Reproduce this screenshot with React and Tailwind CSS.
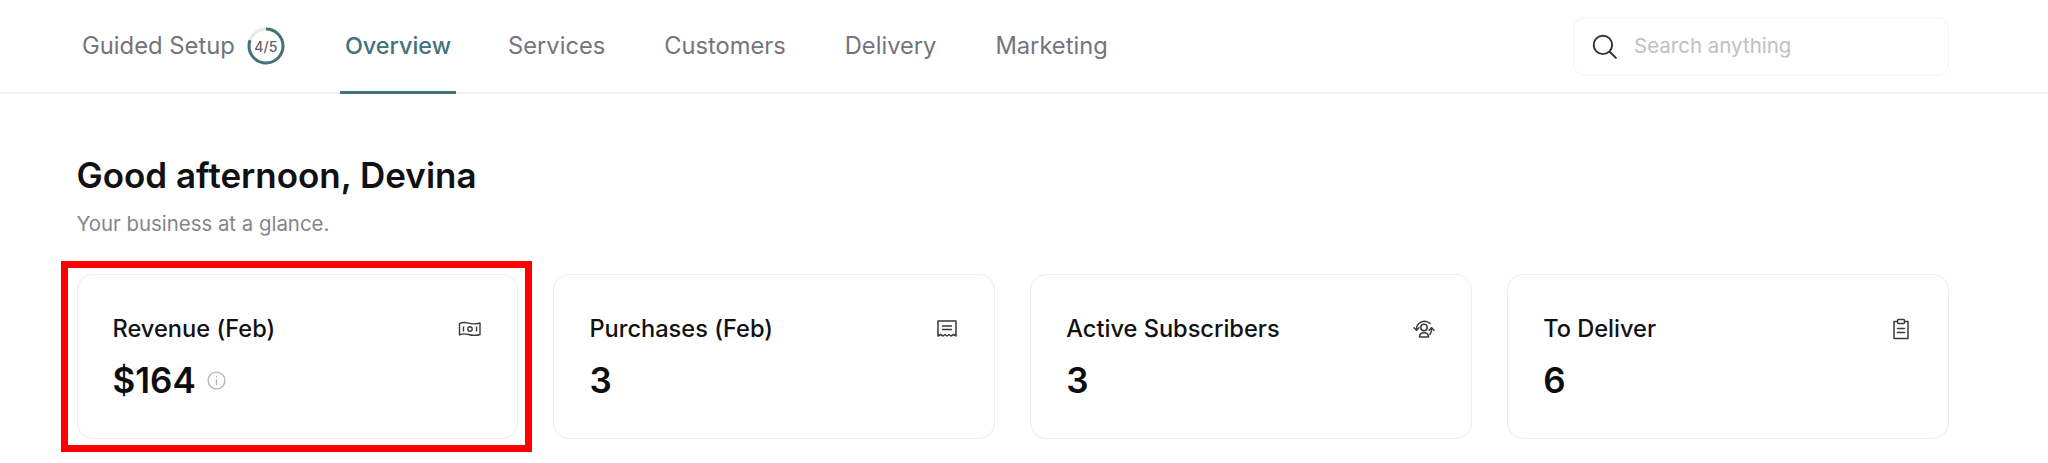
const navItems = ['Services', 'Customers', 'Delivery', 'Marketing']

function ProgressRing() {
  return (
    <div className="relative ml-[12px] flex h-[38px] w-[38px] items-center justify-center">
      <svg viewBox="0 0 38 38" className="absolute inset-0 h-full w-full -rotate-90">
        <circle cx="19" cy="19" r="17" fill="none" stroke="#e9eaec" strokeWidth="3" />
        <circle cx="19" cy="19" r="17" fill="none" stroke="#44727a" strokeWidth="3" strokeDasharray="85.5 106.8" />
      </svg>
      <span className="text-[14px] font-medium text-[#5f6068]">4/5</span>
    </div>
  )
}

function MoneyIcon() {
  return (
    <svg viewBox="0 0 24 18" className="h-[18px] w-[24px]" fill="none" stroke="#3a3a3f" strokeWidth="1.4" strokeLinejoin="round">
      <path d="M1.5 3.5c3-1.6 6-1.2 9-.4s7 1.3 11.5-.1v11.5c-4 1.3-8 .9-11.5 0s-6-1.2-9 .4z" />
      <circle cx="12" cy="9" r="2.2" />
      <path d="M5.5 6.5v5M18.5 6.5v5" />
    </svg>
  )
}

function ReceiptIcon() {
  return (
    <svg viewBox="0 0 24 24" className="h-[24px] w-[24px]" fill="none" stroke="#3a3a3f" strokeWidth="1.5" strokeLinejoin="round" strokeLinecap="round">
      <path d="M3 4h18v15l-2.5-1.5L16 19l-2-1.5L12 19l-2-1.5L8 19l-2.5-1.5L3 19z" />
      <path d="M7.5 9h9M7.5 12.5h9" />
    </svg>
  )
}

function SubscriberIcon() {
  return (
    <svg viewBox="0 0 24 24" className="h-[24px] w-[24px]" fill="none" stroke="#3a3a3f" strokeWidth="1.5" strokeLinejoin="round" strokeLinecap="round">
      <circle cx="12" cy="10.5" r="3.2" />
      <path d="M7.500 20c0-2.800 2-4.200 4.500-4.200s4.500 1.400 4.500 4.200z" />
      <path d="M4.500 13A8 8 0 0 1 18 6.500" />
      <path d="M19.500 11A8 8 0 0 1 18 17.500" />
      <path d="M2 10.800l2.500 2.500L7 10.800M17 13.200l2.500-2.500 2.500 2.500" />
    </svg>
  )
}

function ClipboardIcon() {
  return (
    <svg viewBox="0 0 24 24" className="h-[24px] w-[24px]" fill="none" stroke="#3a3a3f" strokeWidth="1.5" strokeLinejoin="round" strokeLinecap="round">
      <path d="M8.500 4.500H5v17h14v-17h-3.500" />
      <rect x="8.500" y="2.500" width="7" height="4" rx="1" />
      <path d="M8.500 11.500h7M8.500 15.500h7" />
    </svg>
  )
}

function InfoIcon() {
  return (
    <svg viewBox="0 0 18 18" className="mt-[1px] h-[19px] w-[19px]" fill="none" stroke="#aeb3c2" strokeWidth="1.2" strokeLinecap="round">
      <circle cx="9" cy="9" r="8" />
      <path d="M9 8.500v4.500M9 5.200v.3" />
    </svg>
  )
}

function StatCard({ title, value, icon, info }) {
  return (
    <div className="h-[165px] rounded-[16px] border border-[#eeeeef] bg-white pl-[35px] pr-[35px] pt-[40px]">
      <div className="flex h-[28px] items-center justify-between">
        <span className="text-[23.600px] font-medium text-[#111114]">{title}</span>
        <span className="flex w-[24px] items-center justify-center">{icon}</span>
      </div>
      <div className="mt-[15px] flex items-center gap-[11px]">
        <span className="text-[35px] font-semibold leading-[44px] text-[#0d0d10]">{value}</span>
        {info && <InfoIcon />}
      </div>
    </div>
  )
}

export default function App() {
  return (
    <div className="relative h-[463px] overflow-hidden bg-white font-['Inter',sans-serif]">
      <header className="flex h-[94px] items-center justify-between border-b-2 border-[#f2f2f3] pl-[82px] pr-[99px]">
        <nav className="flex h-full items-center">
          <span className="text-[23.800px] text-[#74747d]">Guided Setup</span>
          <ProgressRing />
          <div className="relative ml-[55px] flex h-full items-center px-[5px]">
            <span className="text-[23.400px] font-medium text-[#44727a]">Overview</span>
            <div className="absolute bottom-[-2px] left-0 right-0 h-[3px] bg-[#44727a]" />
          </div>
          <div className="ml-[52px] flex items-center gap-[59px]">
            {navItems.map((item) => (
              <span key={item} className="text-[23.700px] text-[#74747d]">{item}</span>
            ))}
          </div>
        </nav>
        <div className="flex h-[59px] w-[376px] items-center rounded-[12px] border border-[#f3f3f4] pl-[17px]">
          <svg viewBox="0 0 24 24" className="h-[26px] w-[26px]" fill="none" stroke="#333337" strokeWidth="1.8" strokeLinecap="round">
            <circle cx="11" cy="11" r="8.500" />
            <path d="M17.500 17.500L23 23" />
          </svg>
          <span className="ml-[17px] text-[20.500px] text-[#c0c0c6]">Search anything</span>
        </div>
      </header>

      <main className="px-[76.500px] pt-[61px]">
        <h1 className="text-[35px] font-semibold leading-[40px] text-[#111114]">Good afternoon, Devina</h1>
        <p className="mt-[15px] text-[20.400px] leading-[28px] text-[#85858d]">Your business at a glance.</p>
        <div className="mt-[36px] grid w-[1872.500px] grid-cols-4 gap-[35px]">
          <StatCard title="Revenue (Feb)" value="$164" icon={<MoneyIcon />} info />
          <StatCard title="Purchases (Feb)" value="3" icon={<ReceiptIcon />} />
          <StatCard title="Active Subscribers" value="3" icon={<SubscriberIcon />} />
          <StatCard title="To Deliver" value="6" icon={<ClipboardIcon />} />
        </div>
      </main>

      <div className="absolute left-[61px] top-[261px] h-[191px] w-[471px] border-[7px] border-[#ff0000]" />
    </div>
  )
}
